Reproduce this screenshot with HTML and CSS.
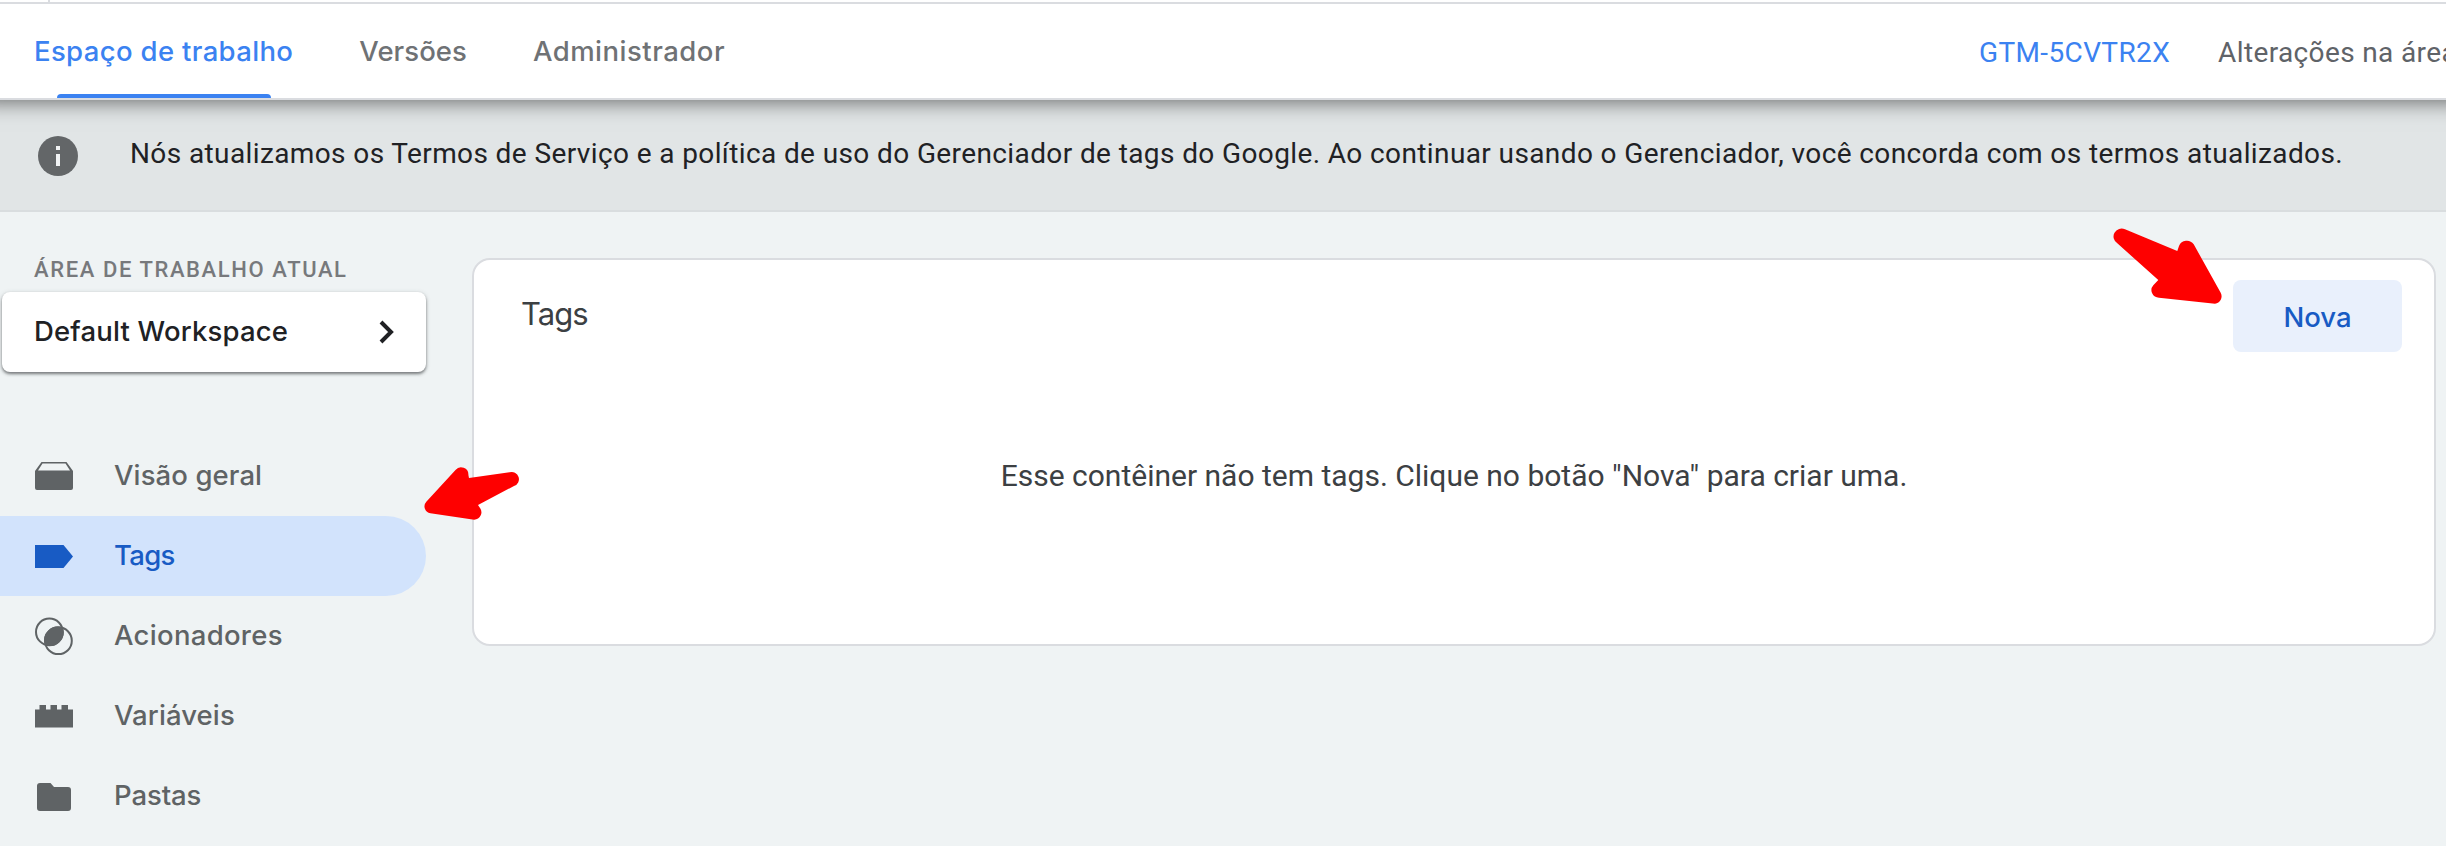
FILE: index.html
```html
<!DOCTYPE html>
<html lang="pt-BR">
<head>
    <meta charset="UTF-8">
    <title>Tags</title>
    <link rel="stylesheet" href="styles.css">
</head>
<body>
<div class="top-strip"></div>
<header class="header">
    <nav class="tabs">
        <a class="tab tab--active">Espaço de trabalho</a>
        <a class="tab tab-versions">Versões</a>
        <a class="tab">Administrador</a>
    </nav>
    <div class="header-info">
        <a class="container-id">GTM-5CVTR2X</a>
        <span class="changes">Alterações na área</span>
    </div>
</header>
<div class="notice">
    <svg class="notice-icon" viewBox="0 0 40 40">
        <circle cx="20" cy="20" r="20" fill="#636668"/>
        <path d="M18 10h4v4h-4zM18 18h4v12h-4z" fill="#f1f3f4"/>
    </svg>
    <p class="notice-text">Nós atualizamos os Termos de Serviço e a política de uso do Gerenciador de tags do Google. Ao continuar usando o Gerenciador, você concorda com os termos atualizados.</p>
</div>
<div class="layout">
    <aside class="sidebar">
        <div class="sidebar-label">ÁREA DE TRABALHO ATUAL</div>
        <button class="workspace">
            <span>Default Workspace</span>
            <svg class="chevron" viewBox="0 0 16 24"><path d="M2 2l10 10L2 22" fill="none" stroke="#202124" stroke-width="4"/></svg>
        </button>
        <ul class="menu">
            <li class="menu-item">
                <svg class="menu-icon" viewBox="0 0 40 40"><path d="M1 15L7.500 6h25L39 15v17a2 2 0 0 1-2 2H3a2 2 0 0 1-2-2zM8.500 7.500L4 14.500h32l-4.500-7z" fill-rule="evenodd"/></svg>
                <span>Visão geral</span>
            </li>
            <li class="menu-item menu-item--active">
                <svg class="menu-icon" viewBox="0 0 40 40"><path d="M1 9h28.500L39 20.500 29.500 32H1z"/></svg>
                <span class="menu-tags">Tags</span>
            </li>
            <li class="menu-item">
                <svg class="menu-icon" viewBox="0 0 40 40">
                    <g fill="none" stroke="currentColor" stroke-width="2"><circle cx="15.400" cy="15.900" r="13.400"/><circle cx="24.400" cy="24.700" r="13.400"/></g>
                    <path d="M28.800 11.800A13.400 13.400 0 0 0 11 28.800A13.400 13.400 0 0 0 28.800 11.800z"/>
                </svg>
                <span class="menu-triggers">Acionadores</span>
            </li>
            <li class="menu-item">
                <svg class="menu-icon" viewBox="0 0 40 40"><path d="M1 13.500h4.500V9H12v4.500h4.500V9H23v4.500h4.500V9H34v4.500h5V31.500H1z"/></svg>
                <span>Variáveis</span>
            </li>
            <li class="menu-item">
                <svg class="menu-icon" viewBox="0 0 40 40"><path d="M6 7h10.500l3.500 4h14a3 3 0 0 1 3 3v18a3 3 0 0 1-3 3H6a3 3 0 0 1-3-3V10a3 3 0 0 1 3-3z"/></svg>
                <span class="menu-folders">Pastas</span>
            </li>
        </ul>
    </aside>
    <main class="card">
        <div class="card-header">
            <h1 class="card-title">Tags</h1>
            <button class="new-button">Nova</button>
        </div>
        <p class="empty">Esse contêiner não tem tags. Clique no botão "Nova" para criar uma.</p>
    </main>
</div>
<svg class="arrows" viewBox="0 0 2446 846">
    <path d="M426.300 501.700L455.500 470A7.300 7.300 0 0 1 468.400 475L469 478 509.500 472.300A7 7 0 0 1 514 486L478 505 480 508A7.400 7.400 0 0 1 474.200 519.700L430.400 513.300A7 7 0 0 1 426.300 501.700z"/>
    <path d="M2125 229.300L2177.300 251 2179 246A8.500 8.500 0 0 1 2193.700 244.300L2220.700 292.700A7.500 7.500 0 0 1 2215 303.700L2159 297.700A7.500 7.500 0 0 1 2153.300 285.300L2158.300 280 2117.300 243.300A8 8 0 0 1 2125 229.300z"/>
</svg>
</body>
</html>
```
FILE: styles.css
```css
html, body {
    height: 100%;
}

body {
    margin: 0;
    overflow: hidden;
    background-color: #eff3f4;
    color: #202124;
    font-family: Roboto, "Liberation Sans", sans-serif;
    font-size: 28px;
}

button {
    border: 0;
    padding: 0;
}

.top-strip {
    position: relative;
    z-index: 2;
    height: 2px;
    background: linear-gradient(#dadce0, #dadce0) 48px 0 / 2px 2px no-repeat #fff;
}

/*top bar*/
.header {
    position: relative;
    z-index: 1;
    display: flex;
    justify-content: space-between;
    box-sizing: border-box;
    height: 98px;
    border-top: 2px solid #dadce0;
    border-bottom: 2px solid #dadce0;
    background-color: #fff;
    box-shadow: 0 -18px 20px 20px rgba(0, 0, 0, .55);
}

.tabs {
    display: flex;
    padding-left: 34px;
}

.tab {
    position: relative;
    line-height: 94px;
    font-family: Inter, Roboto, sans-serif;
    font-size: 27.500px;
    font-weight: 450;
    letter-spacing: .500px;
    color: #6f7275;
}

.tab-versions {
    margin: 0 66px 0 66px;
    letter-spacing: .050px;
}

.tab--active {
    letter-spacing: .350px;
    color: #3b82f1;
}

.tab--active::after {
    content: "";
    position: absolute;
    left: 23px;
    bottom: 0;
    width: 214px;
    height: 4px;
    border-radius: 6px 6px 0 0;
    background-color: #3b82f1;
}

.header-info {
    display: flex;
    width: 467px;
    gap: 48px;
    white-space: nowrap;
    line-height: 97px;
    letter-spacing: .370px;
}

.container-id {
    color: #3b82f1;
}

.changes {
    color: #5f6368;
}

/*terms notice*/
.notice {
    display: flex;
    align-items: center;
    gap: 52px;
    box-sizing: border-box;
    height: 112px;
    padding-left: 38px;
    border-bottom: 2px solid #d9dddf;
    background-color: #e1e5e6;
}

.notice-icon {
    width: 40px;
    height: 40px;
    margin-top: 2px;
}

.notice-text {
    margin: 0 0 4px;
    white-space: nowrap;
    letter-spacing: .390px;
}

.layout {
    display: flex;
    align-items: flex-start;
}

/*left menu*/
.sidebar {
    width: 426px;
    padding-top: 46px;
}

.sidebar-label {
    height: 34px;
    padding-left: 34px;
    line-height: 24px;
    font-size: 22px;
    font-weight: 500;
    letter-spacing: 1.600px;
    color: #77797c;
}

.workspace {
    display: flex;
    align-items: center;
    justify-content: space-between;
    box-sizing: border-box;
    width: 424px;
    height: 80px;
    margin-left: 2px;
    padding: 0 31px 2px 32px;
    border-radius: 8px;
    background-color: #fff;
    box-shadow: 0 2px 3px rgba(60, 64, 67, .6), 0 1px 5px rgba(60, 64, 67, .2);
    color: #202124;
    font-family: Inter, Roboto, sans-serif;
    font-size: 27.500px;
    font-weight: 500;
    letter-spacing: .180px;
}

.chevron {
    width: 16px;
    height: 24px;
    margin-top: 2px;
}

.menu {
    margin: 64px 0 0;
    padding: 0;
    list-style: none;
}

.menu-item {
    display: flex;
    align-items: center;
    gap: 40px;
    height: 80px;
    padding-left: 34px;
    border-radius: 0 40px 40px 0;
    color: #5f6365;
    font-family: Inter, Roboto, sans-serif;
    font-size: 27.500px;
    font-weight: 500;
    letter-spacing: .100px;
}

.menu-item span {
    margin-bottom: 2px;
}

.menu-item .menu-tags {
    letter-spacing: -.700px;
}

.menu-item .menu-triggers {
    letter-spacing: .300px;
}

.menu-item .menu-folders {
    letter-spacing: -.100px;
}

.menu-item--active {
    background-color: #d2e3fc;
    color: #185bc4;
}

.menu-icon {
    width: 40px;
    height: 40px;
    fill: currentColor;
}

/*tag list*/
.card {
    box-sizing: border-box;
    width: 1964px;
    height: 388px;
    margin: 46px 0 0 46px;
    border: 2px solid #dadce0;
    border-radius: 18px;
    background-color: #fff;
}

.card-header {
    display: flex;
    justify-content: space-between;
    align-items: flex-start;
    padding: 20px 32px 0 47px;
}

.card-title {
    margin: 14px 0 0;
    line-height: 40px;
    font-family: Inter, Roboto, sans-serif;
    font-size: 31px;
    font-weight: 400;
    letter-spacing: -1px;
    color: #3c4043;
}

.new-button {
    width: 169px;
    height: 72px;
    border-radius: 8px;
    background-color: #e9f0fc;
    color: #185bc4;
    font-family: Inter, Roboto, sans-serif;
    font-size: 27.500px;
    font-weight: 500;
    line-height: 74px;
}

.empty {
    margin: 106px 0 0;
    text-align: center;
    line-height: 36px;
    font-size: 30px;
    color: #3c4043;
}

/*red arrows over the page*/
.arrows {
    position: absolute;
    z-index: 3;
    left: 0;
    top: 0;
    width: 2446px;
    height: 846px;
    fill: #fe0000;
    pointer-events: none;
}
```
